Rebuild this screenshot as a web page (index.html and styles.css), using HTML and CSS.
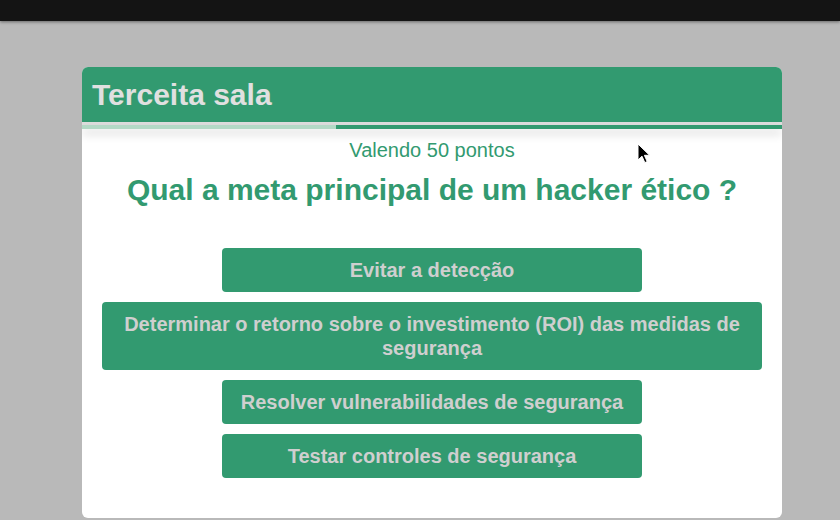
FILE: index.html
```html
<!DOCTYPE html>
<html lang="pt">
<head>
<meta charset="utf-8">
<title>Terceita sala</title>
<link rel="stylesheet" href="styles.css">
</head>
<body>
<div class="topbar"></div>
<main class="page">
  <section class="card">
    <header class="card-header">
      <h1 class="room-title">Terceita sala</h1>
    </header>
    <div class="divider"></div>
    <div class="progress"><div class="progress-done" style="width: 254px"></div></div>
    <div class="card-body">
      <p class="points">Valendo 50 pontos</p>
      <h2 class="question">Qual a meta principal de um hacker ético ?</h2>
      <div class="answers">
        <button class="answer">Evitar a detecção</button>
        <button class="answer">Determinar o retorno sobre o investimento (ROI) das medidas de segurança</button>
        <button class="answer">Resolver vulnerabilidades de segurança</button>
        <button class="answer">Testar controles de segurança</button>
      </div>
    </div>
  </section>
</main>
<svg class="cursor" width="14" height="22" viewBox="0 0 14 22">
  <path d="M1 1 L1 17 L5 13.2 L7.8 19.6 L10.2 18.6 L7.4 12.3 L12.6 12.3 Z" fill="#000" stroke="#fff" stroke-width="1"/>
</svg>
</body>
</html>
```
FILE: styles.css
```css
* { box-sizing: border-box; }

html, body {
  margin: 0;
  padding: 0;
}

body {
  background: #b9b9b9;
  font-family: "Liberation Sans", Arial, sans-serif;
  height: 520px;
  overflow: hidden;
  position: relative;
}

.topbar {
  height: 21px;
  background: #141414;
  box-shadow: 0 1px 3px rgba(0, 0, 0, 0.45);
}

.page {
  padding: 46px 0 0 82px;
}

.card {
  width: 700px;
  background: #ffffff;
  border-radius: 6px;
  overflow: hidden;
}

.card-header {
  height: 55px;
  background: #329a70;
  display: flex;
  align-items: center;
  padding: 0 10px;
}

.room-title {
  margin: 0;
  font-size: 30px;
  font-weight: 700;
  color: #e0e0e0;
  line-height: 34px;
}

.divider {
  height: 3px;
  background: #dedede;
}

.progress {
  height: 4px;
  background: #329a70;
  box-shadow: 0 5px 10px rgba(0, 0, 0, 0.18);
  position: relative;
}

.progress-done {
  height: 100%;
  background: #b3d9c6;
}

.card-body {
  padding: 10px 20px 40px;
  text-align: center;
}

.points {
  margin: 0;
  font-size: 20px;
  line-height: 23px;
  color: #329a70;
}

.question {
  margin: 10px 0 0;
  font-size: 30px;
  line-height: 35px;
  font-weight: 700;
  color: #329a70;
}

.answers {
  margin-top: 41px;
  display: flex;
  flex-direction: column;
  align-items: center;
  gap: 10px;
}

.answer {
  min-width: 420px;
  max-width: 660px;
  padding: 10px 18px;
  border: none;
  border-radius: 4px;
  background: #329a70;
  color: #cfcfcf;
  font-family: "Liberation Sans", Arial, sans-serif;
  font-size: 20px;
  font-weight: 700;
  line-height: 24px;
  cursor: pointer;
}

.cursor {
  position: absolute;
  left: 637px;
  top: 143px;
}
```
